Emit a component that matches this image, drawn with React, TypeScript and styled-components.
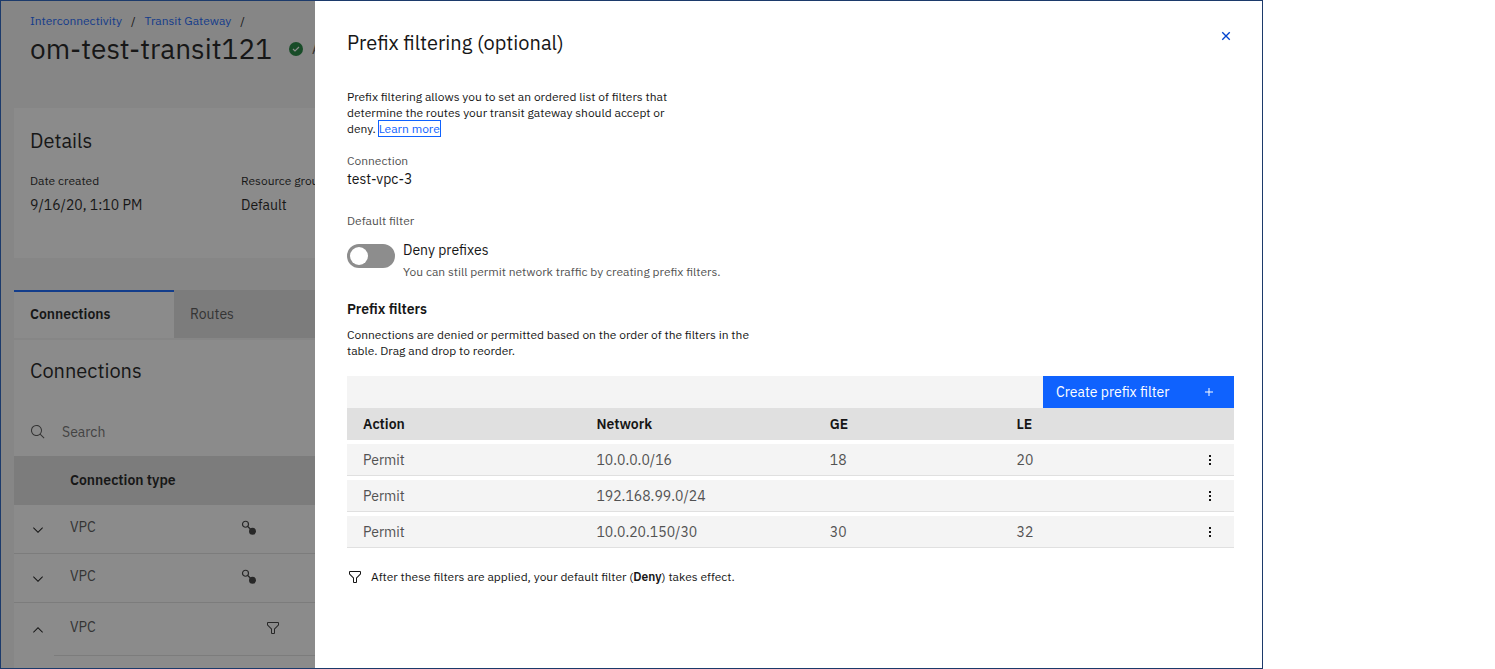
import React, { useState } from 'react';
import styled, { createGlobalStyle, css } from 'styled-components';

const GlobalStyle = createGlobalStyle`
  *, *::before, *::after { box-sizing: border-box; }
  body {
    margin: 0;
    background: #ffffff;
    color: #161616;
    font-family: "IBM Plex Sans", "Noto Sans", "Open Sans", sans-serif;
    font-size: 14px;
    line-height: 18px;
  }
  button, input { font: inherit; }
  h1, h2, h3, p, dl, dd { margin: 0; font-weight: 400; }
  svg { display: block; }
`;

const headingFont = '"IBM Plex Sans", Roboto, "Open Sans", sans-serif';

/* Application frame: the gateway page with the side panel stacked over it */

const Frame = styled.div`
  display: grid;
  grid-template: minmax(0, 1fr) / minmax(0, 1fr);
  min-height: 100vh;
  margin-right: 232px;
  border: 1px solid #1c3a6b;
`;

const Page = styled.main`
  grid-area: 1 / 1;
  display: flex;
  flex-direction: column;
  overflow: hidden;
  padding-left: 13px;
  background: #f4f4f4;
`;

const Scrim = styled.div`
  grid-area: 1 / 1;
  z-index: 1;
  display: flex;
  background: rgba(23, 23, 23, 0.5);
`;

/* Gateway page */

const PageHeader = styled.header`
  padding: 12px 16px 0;
  height: 107px;
`;

const Breadcrumb = styled.nav`
  display: flex;
  gap: 9px;
  font-size: 12px;
  line-height: 16px;
`;

const Link = styled.a`
  color: #0f62fe;
  text-decoration: none;
`;

const TitleRow = styled.div`
  display: flex;
  align-items: center;
  gap: 17px;
`;

const PageTitle = styled.h1`
  font-size: 28px;
  line-height: 40px;
`;

const Status = styled.span`
  display: flex;
  align-items: center;
  gap: 9px;
  color: #525252;
`;

const SectionHeading = styled.h2`
  font-family: ${headingFont};
  font-size: 20px;
  line-height: 28px;
`;

const DetailsCard = styled.section`
  height: 150px;
  padding: 19px 16px;
  background: #ffffff;
`;

const DetailsList = styled.dl`
  display: flex;
  margin-top: 18px;
`;

const DetailsItem = styled.div`
  width: 211px;
`;

const DetailsTerm = styled.dt`
  font-size: 12px;
  line-height: 16px;
`;

const DetailsValue = styled.dd`
  margin-top: 7px;
`;

const Tabs = styled.div`
  display: flex;
  margin: 32px 0 2px;
  background: #f4f4f4;
`;

const Tab = styled.button<{ $active?: boolean }>`
  width: 160px;
  height: 48px;
  padding: 0 16px 2px;
  border: 0;
  border-top: 2px solid #e0e0e0;
  background: #e0e0e0;
  color: #525252;
  text-align: left;
  ${({ $active }) =>
    $active &&
    css`
      border-top-color: #0f62fe;
      background: #ffffff;
      color: #161616;
      font-weight: 600;
    `}
`;

const ConnectionsCard = styled.section`
  flex: 1;
  background: #ffffff;
`;

const CardHeading = styled(SectionHeading)`
  padding: 17px 16px 23px;
`;

const SearchBox = styled.label`
  display: flex;
  align-items: center;
  gap: 16px;
  height: 48px;
  padding: 0 16px;
  color: #525252;
`;

const SearchInput = styled.input`
  flex: 1;
  padding: 0;
  border: 0;
  background: transparent;
  &::placeholder { color: #6f6f6f; opacity: 1; }
`;

const ConnectionsTable = styled.table`
  width: 100%;
  border-collapse: separate;
  border-spacing: 0;
  table-layout: fixed;
`;

const ConnHead = styled.th<{ $width?: number }>`
  width: ${({ $width }) => ($width ? `${$width}px` : 'auto')};
  height: 49px;
  padding: 0 16px 2px;
  background: #e0e0e0;
  text-align: left;
  font-weight: 600;
`;

const ConnCell = styled.td<{ $open?: boolean; $toggle?: boolean }>`
  height: ${({ $open }) => ($open ? 53 : 49)}px;
  padding: ${({ $open }) => ($open ? 15 : 13)}px 16px 0;
  border-bottom: 1px solid ${({ $open, $toggle }) => ($open && $toggle ? '#ffffff' : '#e0e0e0')};
  color: #525252;
  vertical-align: top;
`;

const IconButton = styled.button`
  display: flex;
  align-items: center;
  justify-content: center;
  padding: 0;
  border: 0;
  background: transparent;
  color: #161616;
  cursor: pointer;
`;

const ExpandButton = styled(IconButton)`
  width: 16px;
  height: 24px;
`;

const FeatureIcons = styled.div`
  display: grid;
  grid-template-columns: 16px 16px;
  gap: 8px;
  padding-top: 2px;
  color: #393939;
`;

/* Prefix filtering panel */

const Panel = styled.section`
  flex: 1;
  min-width: 0;
  margin-left: 314px;
  padding: 20px 28px 32px 32px;
  background: #ffffff;
`;

const PanelHeader = styled.header`
  display: flex;
  align-items: center;
  justify-content: space-between;
  height: 44px;
`;

const CloseButton = styled(IconButton)`
  width: 16px;
  height: 16px;
  margin-bottom: 14px;
  color: #0043ce;
`;

const SmallText = styled.p<{ $max?: number; $muted?: boolean }>`
  max-width: ${({ $max }) => ($max ? `${$max}px` : 'none')};
  font-size: 12px;
  line-height: 16px;
  color: ${({ $muted }) => ($muted ? '#525252' : '#161616')};
`;

const FocusedLink = styled(Link)`
  outline: 1px solid #0f62fe;
`;

const Intro = styled.div`
  margin-top: 24px;
`;

const Field = styled.div<{ $top: number }>`
  margin-top: ${({ $top }) => $top}px;
`;

const FieldValue = styled.p`
  margin-top: 1px;
`;

const ToggleRow = styled.label`
  display: grid;
  grid-template-columns: 48px 1fr;
  gap: 8px;
  margin-top: 12px;
  cursor: pointer;
`;

const Toggle = styled.input`
  appearance: none;
  display: flex;
  align-items: center;
  width: 48px;
  height: 24px;
  margin: 3px 0 0;
  padding: 0 3px;
  border-radius: 12px;
  background: #8d8d8d;
  &::before {
    content: "";
    width: 18px;
    height: 18px;
    border-radius: 9px;
    background: #ffffff;
  }
  &:checked { background: #24a148; }
  &:checked::before { margin-left: auto; }
`;

const ToggleText = styled.div`
  display: flex;
  flex-direction: column;
  gap: 5px;
`;

const FiltersHeading = styled.h3`
  margin: 20px 0 9px;
  font-size: 14px;
  font-weight: 600;
`;

const Toolbar = styled.div`
  display: flex;
  justify-content: flex-end;
  margin-top: 17px;
  background: #f4f4f4;
`;

const CreateButton = styled.button`
  display: flex;
  align-items: center;
  justify-content: space-between;
  width: 191px;
  height: 32px;
  padding: 0 17px 0 13px;
  border: 0;
  background: #0f62fe;
  color: #ffffff;
  cursor: pointer;
`;

const FilterTable = styled.table`
  width: 100%;
  border-collapse: separate;
  border-spacing: 0;
  table-layout: fixed;
`;

const FilterHead = styled.th<{ $share: number }>`
  width: calc(100% * ${({ $share }) => $share} / 19);
  height: 32px;
  padding: 0 16px;
  background: #e0e0e0;
  text-align: left;
  font-weight: 600;
`;

const FilterCell = styled.td<{ $menu?: boolean }>`
  height: 36px;
  padding: ${({ $menu }) => ($menu ? '0 16px 0 0' : '0 16px')};
  border-top: 4px solid #ffffff;
  border-bottom: 1px solid #e0e0e0;
  background: #f4f4f4;
  color: #525252;
`;

const MenuButton = styled(IconButton)`
  width: 16px;
  height: 16px;
  margin-left: auto;
`;

const FilterNote = styled.div`
  display: flex;
  align-items: center;
  gap: 8px;
  margin-top: 21px;
`;

const Strong = styled.strong`
  font-weight: 600;
`;

/* Icons, drawn on a 32-unit grid */

type IconProps = { size?: number; children: React.ReactNode };

const Icon = ({ size = 16, children }: IconProps) => (
  <svg width={size} height={size} viewBox="0 0 32 32" fill="currentColor" aria-hidden="true">
    {children}
  </svg>
);

const CloseIcon = () => (
  <Icon>
    <path
      d="m8.5 8.5 15 15m0-15-15 15"
      fill="none"
      stroke="currentColor"
      strokeWidth="2.8"
    />
  </Icon>
);
const AddIcon = () => (
  <Icon>
    <path d="M17 15V8h-2v7H8v2h7v7h2v-7h7v-2z" />
  </Icon>
);
const SearchIcon = () => (
  <Icon>
    <path d="M29 27.6 21.4 20a11 11 0 1 0-1.4 1.4l7.6 7.6zM4 13a9 9 0 1 1 18 0 9 9 0 0 1-18 0z" />
  </Icon>
);
const ChevronIcon = ({ up }: { up?: boolean }) => (
  <Icon>
    {up ? (
      <path d="m16 10 10 10-1.4 1.4L16 12.8l-8.6 8.6L6 20z" />
    ) : (
      <path d="M16 22 6 12l1.4-1.4 8.6 8.6 8.6-8.6L26 12z" />
    )}
  </Icon>
);
const FilterIcon = () => (
  <Icon>
    <path d="M18 28h-4a2 2 0 0 1-2-2v-7.6l-7.4-7.4A2 2 0 0 1 4 9.6V6a2 2 0 0 1 2-2h20a2 2 0 0 1 2 2v3.6a2 2 0 0 1-.6 1.4L20 18.4V26a2 2 0 0 1-2 2zM6 6v3.6l8 8V26h4v-8.4l8-8V6z" />
  </Icon>
);
const ConnectIcon = () => (
  <Icon>
    <circle cx="9" cy="8.5" r="6" fill="none" stroke="currentColor" strokeWidth="2.4" />
    <path d="m13 12.5 6 6" stroke="currentColor" strokeWidth="2.4" />
    <circle cx="23" cy="22.5" r="7" />
  </Icon>
);
const MenuIcon = () => (
  <Icon>
    <path d="M14 6h4v4h-4zM14 14h4v4h-4zM14 22h4v4h-4z" />
  </Icon>
);
const ActiveIcon = () => (
  <svg width="14" height="14" viewBox="0 0 14 14" aria-hidden="true">
    <circle cx="7" cy="7" r="7" fill="#198038" />
    <path d="m4 7 2 2 4-4" fill="none" stroke="#ffffff" strokeWidth="1.2" />
  </svg>
);

const connections = [
  { type: 'VPC', linked: true, open: false },
  { type: 'VPC', linked: true, open: false },
  { type: 'VPC', linked: false, open: true },
];

const filters = [
  { action: 'Permit', network: '10.0.0.0/16', ge: '18', le: '20' },
  { action: 'Permit', network: '192.168.99.0/24', ge: '', le: '' },
  { action: 'Permit', network: '10.0.20.150/30', ge: '30', le: '32' },
];

const GatewayPage = () => (
  <Page>
    <PageHeader>
      <Breadcrumb aria-label="Breadcrumb">
        <Link href="#interconnectivity">Interconnectivity</Link>
        <span>/</span>
        <Link href="#transit">Transit Gateway</Link>
        <span>/</span>
      </Breadcrumb>
      <TitleRow>
        <PageTitle>om-test-transit121</PageTitle>
        <Status>
          <ActiveIcon />
          Active
        </Status>
      </TitleRow>
    </PageHeader>
    <DetailsCard>
      <SectionHeading>Details</SectionHeading>
      <DetailsList>
        <DetailsItem>
          <DetailsTerm>Date created</DetailsTerm>
          <DetailsValue>9/16/20, 1:10 PM</DetailsValue>
        </DetailsItem>
        <DetailsItem>
          <DetailsTerm>Resource group</DetailsTerm>
          <DetailsValue>Default</DetailsValue>
        </DetailsItem>
      </DetailsList>
    </DetailsCard>
    <Tabs role="tablist">
      <Tab role="tab" aria-selected="true" $active>Connections</Tab>
      <Tab role="tab" aria-selected="false">Routes</Tab>
    </Tabs>
    <ConnectionsCard>
      <CardHeading>Connections</CardHeading>
      <SearchBox>
        <SearchIcon />
        <SearchInput type="text" placeholder="Search" aria-label="Search connections" />
      </SearchBox>
      <ConnectionsTable>
        <thead>
          <tr>
            <ConnHead $width={40} />
            <ConnHead $width={171}>Connection type</ConnHead>
            <ConnHead />
          </tr>
        </thead>
        <tbody>
          {connections.map(({ type, linked, open }, i) => (
            <tr key={i}>
              <ConnCell $open={open} $toggle>
                <ExpandButton aria-label={open ? 'Collapse row' : 'Expand row'}>
                  <ChevronIcon up={open} />
                </ExpandButton>
              </ConnCell>
              <ConnCell $open={open}>{type}</ConnCell>
              <ConnCell $open={open}>
                <FeatureIcons>
                  {linked ? <ConnectIcon /> : <span />}
                  {!linked && <FilterIcon />}
                </FeatureIcons>
              </ConnCell>
            </tr>
          ))}
        </tbody>
      </ConnectionsTable>
    </ConnectionsCard>
  </Page>
);

const FilterPanel = () => {
  const [permit, setPermit] = useState(false);
  return (
    <Panel role="dialog" aria-label="Prefix filtering">
      <PanelHeader>
        <SectionHeading>Prefix filtering (optional)</SectionHeading>
        <CloseButton aria-label="Close">
          <CloseIcon />
        </CloseButton>
      </PanelHeader>
      <Intro>
        <SmallText $max={344}>
          Prefix filtering allows you to set an ordered list of filters that determine the routes
          your transit gateway should accept or deny.{' '}
          <FocusedLink href="#learn-more">Learn more</FocusedLink>
        </SmallText>
      </Intro>
      <Field $top={16}>
        <SmallText $muted>Connection</SmallText>
        <FieldValue>test-vpc-3</FieldValue>
      </Field>
      <Field $top={25}>
        <SmallText $muted>Default filter</SmallText>
        <ToggleRow>
          <Toggle
            type="checkbox"
            role="switch"
            checked={permit}
            onChange={(e) => setPermit(e.target.checked)}
          />
          <ToggleText>
            <span>{permit ? 'Permit prefixes' : 'Deny prefixes'}</span>
            <SmallText as="span" $muted>
              You can still permit network traffic by creating prefix filters.
            </SmallText>
          </ToggleText>
        </ToggleRow>
      </Field>
      <FiltersHeading>Prefix filters</FiltersHeading>
      <SmallText $max={428}>
        Connections are denied or permitted based on the order of the filters in the table. Drag
        and drop to reorder.
      </SmallText>
      <Toolbar>
        <CreateButton>
          Create prefix filter
          <AddIcon />
        </CreateButton>
      </Toolbar>
      <FilterTable>
        <thead>
          <tr>
            <FilterHead $share={5}>Action</FilterHead>
            <FilterHead $share={5}>Network</FilterHead>
            <FilterHead $share={4}>GE</FilterHead>
            <FilterHead $share={4}>LE</FilterHead>
            <FilterHead $share={1} />
          </tr>
        </thead>
        <tbody>
          {filters.map((f) => (
            <tr key={f.network}>
              <FilterCell>{f.action}</FilterCell>
              <FilterCell>{f.network}</FilterCell>
              <FilterCell>{f.ge}</FilterCell>
              <FilterCell>{f.le}</FilterCell>
              <FilterCell $menu>
                <MenuButton aria-label={`Options for ${f.network}`}>
                  <MenuIcon />
                </MenuButton>
              </FilterCell>
            </tr>
          ))}
        </tbody>
      </FilterTable>
      <FilterNote>
        <FilterIcon />
        <SmallText>
          After these filters are applied, your default filter (<Strong>Deny</Strong>) takes
          effect.
        </SmallText>
      </FilterNote>
    </Panel>
  );
};

export default function App() {
  return (
    <>
      <GlobalStyle />
      <Frame>
        <GatewayPage />
        <Scrim>
          <FilterPanel />
        </Scrim>
      </Frame>
    </>
  );
}
